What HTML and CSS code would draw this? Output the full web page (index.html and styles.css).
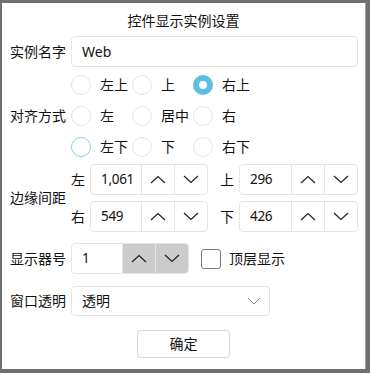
FILE: index.html
```html
<!DOCTYPE html>
<html lang="zh">
<head>
<meta charset="utf-8">
<title>控件显示实例设置</title>
<link rel="stylesheet" href="styles.css">
</head>
<body>
<div class="dialog">
  <div class="title">控件显示实例设置</div>

  <div class="row name-row">
    <div class="label">实例名字</div>
    <div class="input">Web</div>
  </div>

  <div class="row align-block">
    <div class="label">对齐方式</div>
    <div class="radio-grid">
      <div class="radio"><span class="circle"></span>左上</div>
      <div class="radio"><span class="circle"></span>上</div>
      <div class="radio"><span class="circle checked"></span>右上</div>
      <div class="radio"><span class="circle"></span>左</div>
      <div class="radio"><span class="circle"></span>居中</div>
      <div class="radio"><span class="circle"></span>右</div>
      <div class="radio"><span class="circle hover"></span>左下</div>
      <div class="radio"><span class="circle"></span>下</div>
      <div class="radio"><span class="circle"></span>右下</div>
    </div>
  </div>

  <div class="row margin-block">
    <div class="label">边缘间距</div>
    <div class="margin-rows">
      <div class="margin-row">
        <span class="sublabel">左</span>
        <div class="spin w118">
          <div class="val">1,061</div>
          <div class="btn"><svg width="16" height="9" viewBox="0 0 16 9"><path d="M1 8 L8 1.5 L15 8" fill="none" stroke="#222" stroke-width="1.2"/></svg></div>
          <div class="btn"><svg width="16" height="9" viewBox="0 0 16 9"><path d="M1 1 L8 7.5 L15 1" fill="none" stroke="#222" stroke-width="1.2"/></svg></div>
        </div>
        <span class="sublabel second">上</span>
        <div class="spin w119">
          <div class="val">296</div>
          <div class="btn"><svg width="16" height="9" viewBox="0 0 16 9"><path d="M1 8 L8 1.5 L15 8" fill="none" stroke="#222" stroke-width="1.2"/></svg></div>
          <div class="btn"><svg width="16" height="9" viewBox="0 0 16 9"><path d="M1 1 L8 7.5 L15 1" fill="none" stroke="#222" stroke-width="1.2"/></svg></div>
        </div>
      </div>
      <div class="margin-row">
        <span class="sublabel">右</span>
        <div class="spin w118">
          <div class="val">549</div>
          <div class="btn"><svg width="16" height="9" viewBox="0 0 16 9"><path d="M1 8 L8 1.5 L15 8" fill="none" stroke="#222" stroke-width="1.2"/></svg></div>
          <div class="btn"><svg width="16" height="9" viewBox="0 0 16 9"><path d="M1 1 L8 7.5 L15 1" fill="none" stroke="#222" stroke-width="1.2"/></svg></div>
        </div>
        <span class="sublabel second">下</span>
        <div class="spin w119">
          <div class="val">426</div>
          <div class="btn"><svg width="16" height="9" viewBox="0 0 16 9"><path d="M1 8 L8 1.5 L15 8" fill="none" stroke="#222" stroke-width="1.2"/></svg></div>
          <div class="btn"><svg width="16" height="9" viewBox="0 0 16 9"><path d="M1 1 L8 7.5 L15 1" fill="none" stroke="#222" stroke-width="1.2"/></svg></div>
        </div>
      </div>
    </div>
  </div>

  <div class="row display-row">
    <div class="label">显示器号</div>
    <div class="spin w118 grey">
      <div class="val">1</div>
      <div class="btn"><svg width="16" height="9" viewBox="0 0 16 9"><path d="M1 8 L8 1.5 L15 8" fill="none" stroke="#222" stroke-width="1.2"/></svg></div>
      <div class="btn"><svg width="16" height="9" viewBox="0 0 16 9"><path d="M1 1 L8 7.5 L15 1" fill="none" stroke="#222" stroke-width="1.2"/></svg></div>
    </div>
    <span class="checkbox"></span>
    <span class="check-label">顶层显示</span>
  </div>

  <div class="row combo-row">
    <div class="label">窗口透明</div>
    <div class="combo">
      <span>透明</span>
      <svg width="14" height="8" viewBox="0 0 14 8"><path d="M1 1 L7 7 L13 1" fill="none" stroke="#8a8a8a" stroke-width="1"/></svg>
    </div>
  </div>

  <div class="footer">
    <div class="ok-btn">确定</div>
  </div>
</div>
</body>
</html>
```

FILE: styles.css
```css
* { box-sizing: border-box; }

html, body {
  margin: 0;
  padding: 0;
  background: #6f6f6f;
}

body {
  font-family: "Noto Sans", "Noto Sans CJK SC", sans-serif;
  font-size: 14px;
  color: #111;
}

.dialog {
  margin: 3px 0 0 2px;
  width: 364px;
  height: 366px;
  background: #fff;
  border-right: 1px solid #a6a6a6;
  padding: 8px 0 0 8px;
  display: flex;
  flex-direction: column;
}

.title {
  height: 20px;
  line-height: 20px;
  text-align: center;
  padding-right: 8px;
}

.row {
  display: flex;
  align-items: center;
}

.label {
  flex: 0 0 61px;
  line-height: 20px;
  white-space: nowrap;
}

.name-row {
  margin-top: 5px;
  height: 31px;
}

.input {
  width: 287px;
  height: 31px;
  border: 1px solid #e4e4e4;
  border-radius: 4px;
  padding-left: 10px;
  line-height: 29px;
}

.align-block {
  margin-top: 2px;
}

.radio-grid {
  display: grid;
  grid-template-columns: 61px 61px 61px;
  grid-auto-rows: 31px;
  align-items: center;
}

.radio {
  display: flex;
  align-items: center;
  line-height: 20px;
  white-space: nowrap;
}

.circle {
  flex: 0 0 20px;
  width: 20px;
  height: 20px;
  border: 1px solid #e2e2e2;
  border-radius: 50%;
  margin-right: 9px;
  background: #fff;
}

.circle.hover {
  border-color: #86cfe4;
}

.circle.checked {
  border: 6px solid #5bc0de;
}

.margin-block {
  margin-top: 2px;
}

.margin-rows {
  display: flex;
  flex-direction: column;
  gap: 6px;
}

.margin-row {
  display: flex;
  align-items: center;
  height: 31px;
}

.sublabel {
  flex: 0 0 19px;
  line-height: 20px;
}

.sublabel.second {
  margin-left: 12px;
}

.spin {
  display: flex;
  height: 31px;
  border: 1px solid #e4e4e4;
  border-radius: 4px;
  overflow: hidden;
}

.spin.w118 { width: 118px; }
.spin.w119 { width: 119px; }

.val {
  flex: 1 1 auto;
  padding-left: 10px;
  line-height: 29px;
  font-size: 13.5px;
  letter-spacing: -0.3px;
}

.btn {
  flex: 0 0 33px;
  border-left: 1px solid #e4e4e4;
  display: flex;
  align-items: center;
  justify-content: center;
}

.spin.w119 .val { flex-basis: 51px; }

.display-row {
  margin-top: 11px;
  height: 31px;
}

.spin.grey .btn {
  background: #cccccc;
  border-left: 1px solid #e6e6e6;
}

.checkbox {
  width: 20px;
  height: 20px;
  margin-left: 12px;
  border: 1px solid #7a7a7a;
  border-radius: 3px;
}

.check-label {
  margin-left: 8px;
  line-height: 20px;
}

.combo-row {
  margin-top: 12px;
  height: 30px;
}

.combo {
  width: 199px;
  height: 30px;
  border: 1px solid #e4e4e4;
  border-radius: 4px;
  padding: 0 8px 0 10px;
  display: flex;
  align-items: center;
  justify-content: space-between;
  line-height: 20px;
}

.footer {
  margin-top: 14px;
  display: flex;
  justify-content: center;
  padding-right: 8px;
}

.ok-btn {
  width: 93px;
  height: 28px;
  border: 1px solid #d6d6d6;
  border-radius: 4px;
  text-align: center;
  line-height: 26px;
}
```
